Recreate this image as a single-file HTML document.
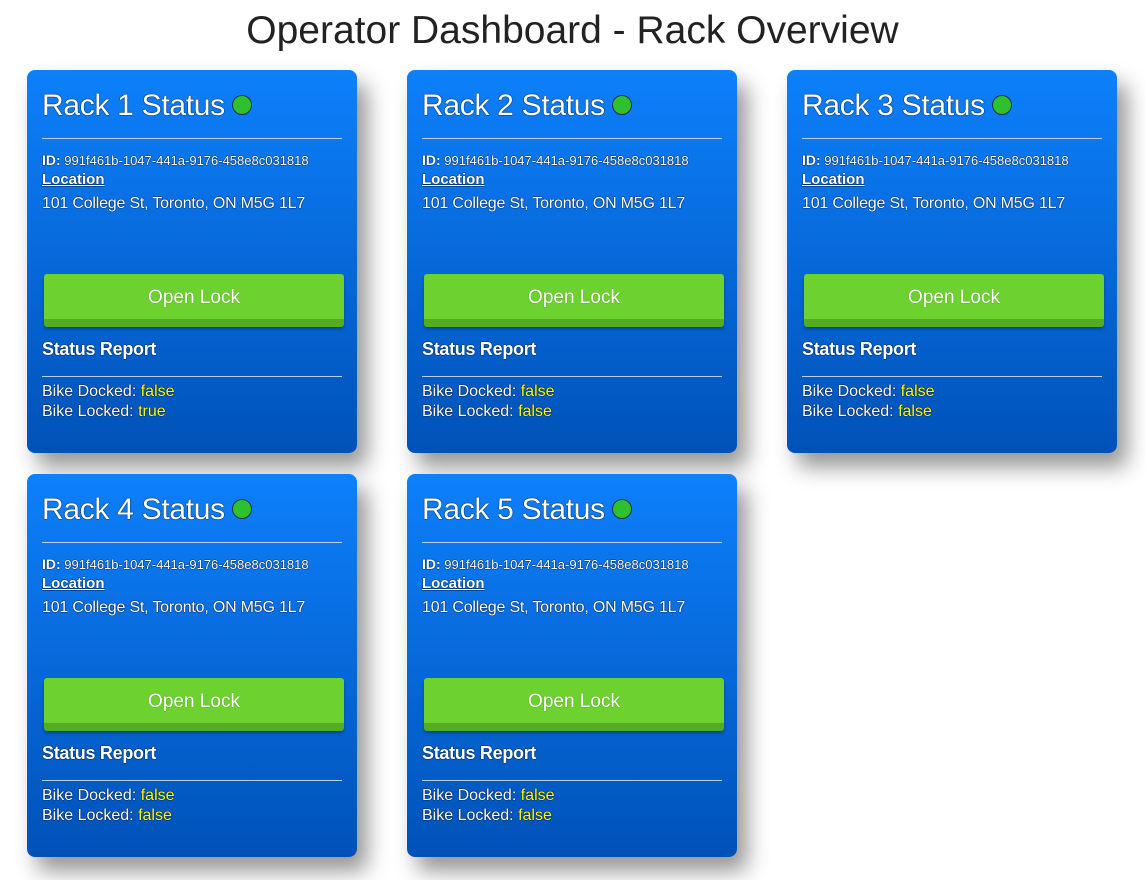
<!DOCTYPE html>
<html><head><style>
body{margin:0;background:#fff;font-family:"Liberation Sans",sans-serif;width:1145px;height:880px;overflow:hidden;position:relative}
h1{margin:0;position:absolute;top:9px;left:0;width:1145px;text-align:center;font-size:39px;font-weight:400;color:#222;letter-spacing:0px}
.card{position:absolute;width:330px;height:383px;border-radius:8px;background:linear-gradient(#0d80fb,#0052b8);box-shadow:10px 14px 22px rgba(0,0,0,.42);color:#fff;text-shadow:0 0 1px #000,0 0 1px #000}
.t{position:absolute;left:15px;top:19px;font-size:30px;letter-spacing:-0.3px;white-space:nowrap}
.dot{display:inline-block;width:18px;height:18px;border-radius:50%;background:#2ec02e;border:1px solid #134;vertical-align:middle;margin-left:7px;position:relative;top:-2px}
.hr{position:absolute;left:15px;width:300px;height:1px;background:#b8cdef}
.id{position:absolute;left:15px;top:82px;font-size:13px;white-space:nowrap}
.id b{font-size:14px}
.loc{position:absolute;left:15px;top:101px;font-size:15px;font-weight:bold;text-decoration:underline}
.addr{position:absolute;left:15px;top:125px;font-size:16px;white-space:nowrap;letter-spacing:-0.2px}
.btn{position:absolute;left:17px;top:204px;width:300px;height:45px;background:#6dd12f;border-radius:3px;border-bottom:8px solid #54ac22;box-shadow:0 2px 3px rgba(0,0,0,.3);text-align:center;line-height:47px;font-size:19px;text-shadow:0 0 1px rgba(0,0,0,.4)}
.sr{position:absolute;left:15px;top:269px;font-size:18px;font-weight:bold;letter-spacing:-0.3px}
.l{position:absolute;left:15px;font-size:16px;white-space:nowrap}
.y{color:#ffff00}
</style></head><body>
<h1>Operator Dashboard - Rack Overview</h1>
<div class="card" style="left:27px;top:70px"><div class="t">Rack 1 Status<span class="dot"></span></div><div class="hr" style="top:68px"></div><div class="id"><b>ID:</b> 991f461b-1047-441a-9176-458e8c031818</div><div class="loc">Location</div><div class="addr">101 College St, Toronto, ON M5G 1L7</div><div class="btn">Open Lock</div><div class="sr">Status Report</div><div class="hr" style="top:306px"></div><div class="l" style="top:313px">Bike Docked: <span class="y">false</span></div><div class="l" style="top:333px">Bike Locked: <span class="y">true</span></div></div>
<div class="card" style="left:407px;top:70px"><div class="t">Rack 2 Status<span class="dot"></span></div><div class="hr" style="top:68px"></div><div class="id"><b>ID:</b> 991f461b-1047-441a-9176-458e8c031818</div><div class="loc">Location</div><div class="addr">101 College St, Toronto, ON M5G 1L7</div><div class="btn">Open Lock</div><div class="sr">Status Report</div><div class="hr" style="top:306px"></div><div class="l" style="top:313px">Bike Docked: <span class="y">false</span></div><div class="l" style="top:333px">Bike Locked: <span class="y">false</span></div></div>
<div class="card" style="left:787px;top:70px"><div class="t">Rack 3 Status<span class="dot"></span></div><div class="hr" style="top:68px"></div><div class="id"><b>ID:</b> 991f461b-1047-441a-9176-458e8c031818</div><div class="loc">Location</div><div class="addr">101 College St, Toronto, ON M5G 1L7</div><div class="btn">Open Lock</div><div class="sr">Status Report</div><div class="hr" style="top:306px"></div><div class="l" style="top:313px">Bike Docked: <span class="y">false</span></div><div class="l" style="top:333px">Bike Locked: <span class="y">false</span></div></div>
<div class="card" style="left:27px;top:474px"><div class="t">Rack 4 Status<span class="dot"></span></div><div class="hr" style="top:68px"></div><div class="id"><b>ID:</b> 991f461b-1047-441a-9176-458e8c031818</div><div class="loc">Location</div><div class="addr">101 College St, Toronto, ON M5G 1L7</div><div class="btn">Open Lock</div><div class="sr">Status Report</div><div class="hr" style="top:306px"></div><div class="l" style="top:313px">Bike Docked: <span class="y">false</span></div><div class="l" style="top:333px">Bike Locked: <span class="y">false</span></div></div>
<div class="card" style="left:407px;top:474px"><div class="t">Rack 5 Status<span class="dot"></span></div><div class="hr" style="top:68px"></div><div class="id"><b>ID:</b> 991f461b-1047-441a-9176-458e8c031818</div><div class="loc">Location</div><div class="addr">101 College St, Toronto, ON M5G 1L7</div><div class="btn">Open Lock</div><div class="sr">Status Report</div><div class="hr" style="top:306px"></div><div class="l" style="top:313px">Bike Docked: <span class="y">false</span></div><div class="l" style="top:333px">Bike Locked: <span class="y">false</span></div></div>
</body></html>
